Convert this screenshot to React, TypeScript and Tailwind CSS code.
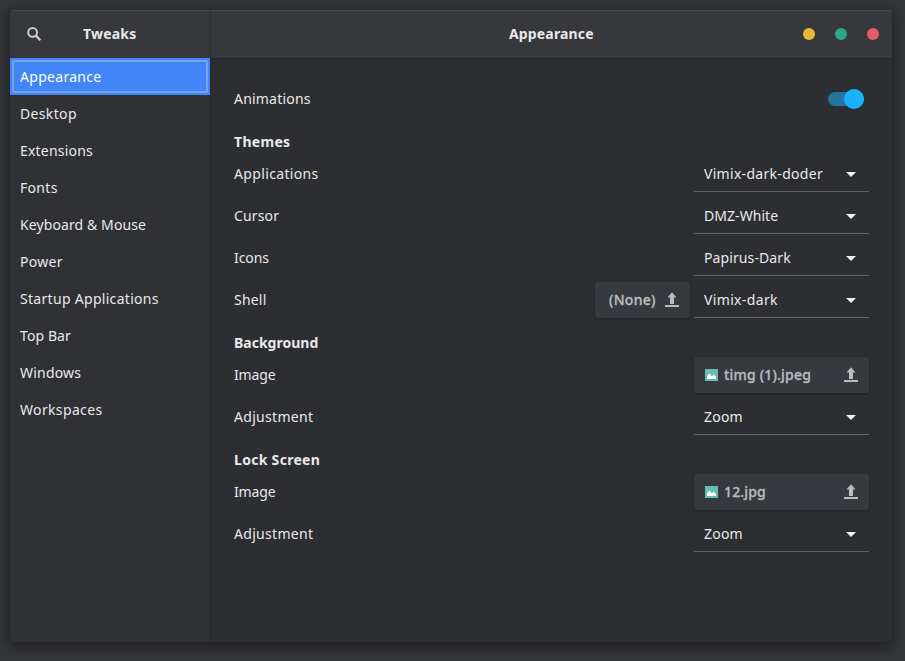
import React from 'react';

const navItems = [
  { label: 'Desktop', spacing: 'tracking-[0.35px]' },
  { label: 'Extensions', spacing: 'tracking-[0.2px]' },
  { label: 'Fonts', spacing: 'tracking-[0.3px]' },
  { label: 'Keyboard & Mouse', spacing: 'tracking-[0.1px]' },
  { label: 'Power', spacing: 'tracking-[0.3px]' },
  { label: 'Startup Applications', spacing: 'tracking-[0.3px]' },
  { label: 'Top Bar', spacing: 'tracking-[0.1px]' },
  { label: 'Windows', spacing: 'tracking-[0.2px]' },
  { label: 'Workspaces', spacing: 'tracking-[0.35px]' },
];

function SearchIcon() {
  return (
    <svg width="16" height="16" viewBox="0 0 16 16" fill="none" stroke="#d0d0d2">
      <circle cx="6.6" cy="6.4" r="4.4" strokeWidth="1.9" />
      <path d="M9.8 9.6l4.6 4.6" strokeWidth="2.3" />
    </svg>
  );
}

function UploadIcon() {
  return (
    <svg width="14" height="16" viewBox="0 0 14 16" fill="#bcbcbe" className="shrink-0">
      <path d="M7 0.3L11.5 5.6H9V12H5V5.6H2.5z" />
      <path d="M0 13h14v2H0z" />
    </svg>
  );
}

function ImageIcon() {
  return (
    <svg width="13" height="12" viewBox="0 0 13 12" className="shrink-0">
      <path d="M0 0h13v12H0z" fill="#67bcb2" />
      <path d="M2 10V7.5L4.4 4.2l2.2 3L9 5.7l2 2.3v2z" fill="#fff" />
    </svg>
  );
}

function Select({ value, spacing }: { value: string; spacing: string }) {
  return (
    <button className="flex h-9 w-[175px] items-center justify-between border-b border-[#626367] pr-[13px] pl-[10px] text-left">
      <span className={spacing}>{value}</span>
      <svg width="10" height="5" viewBox="0 0 10 5" fill="#f0f0f0" className="mt-px">
        <path d="M0 0h10L5 5z" />
      </svg>
    </button>
  );
}

function FileButton({ name, spacing }: { name: string; spacing: string }) {
  return (
    <button className="flex h-9 w-[175px] items-center rounded-[3px] bg-[#363a3e] pr-[11px] pl-[11px] font-medium text-[#bcbcbe] shadow-[0_1px_2px_rgba(0,0,0,0.3)]">
      <ImageIcon />
      <span className={'ml-[6px] flex-1 text-left [-webkit-text-stroke:0.3px_#bcbcbe] ' + spacing}>{name}</span>
      <UploadIcon />
    </button>
  );
}

function Row({ label, spacing, children }: { label: string; spacing: string; children: React.ReactNode }) {
  return (
    <div className="flex h-9 items-center justify-between">
      <span className={spacing}>{label}</span>
      <div className="flex gap-1">{children}</div>
    </div>
  );
}

function Heading({ label, spacing }: { label: string; spacing: string }) {
  return <h2 className={'flex items-center font-bold ' + spacing}>{label}</h2>;
}

export default function App() {
  return (
    <div className="h-[661px] w-[905px] overflow-hidden bg-[#35363a] px-[10px] pt-[10px] font-['Noto_Sans','Open_Sans',sans-serif] text-[14px] leading-[20px] whitespace-nowrap text-[#e9e9ea]">
      <div className="flex h-[632px] w-[882px] overflow-hidden rounded-t-[3px] bg-[#2d2e32] shadow-[0_3px_14px_2px_rgba(0,0,0,0.42)]">
        <aside className="flex w-[200px] flex-col bg-[#303135]">
          <header className="flex h-12 items-center border-t border-[#4b4c50] bg-[#37383c] pb-px pl-4">
            <SearchIcon />
            <h1 className="ml-[41px] font-bold tracking-[0.2px]">Tweaks</h1>
          </header>
          <nav className="flex flex-col">
            <a className="flex h-[37px] bg-[#4285f6] p-[2px] text-white">
              <span className="flex flex-1 items-center rounded-[2px] border-2 border-[#72a4f8] pl-[6px] tracking-[0.3px]">Appearance</span>
            </a>
            {navItems.map((item) => (
              <a key={item.label} className={'flex h-[37px] items-center pl-[10px] ' + item.spacing}>
                {item.label}
              </a>
            ))}
          </nav>
        </aside>
        <div className="flex w-px flex-col bg-[#28292c]">
          <div className="h-12 bg-[#303135]" />
        </div>
        <main className="flex flex-1 flex-col">
          <header className="flex h-[49px] items-center border-t border-b border-t-[#4b4c50] border-b-[#232427] bg-[#37383c] pb-px">
            <h1 className="ml-[298px] font-bold tracking-[0.15px]">Appearance</h1>
            <div className="mr-[13px] ml-auto flex gap-5">
              <span className="size-3 rounded-full bg-[#e9b836]" />
              <span className="size-3 rounded-full bg-[#2fa58b]" />
              <span className="size-3 rounded-full bg-[#e55c66]" />
            </div>
          </header>
          <div className="grid grid-rows-[36px_38px] gap-y-0 pt-[22px] pr-[23px] pl-[23px]">
            <Row label="Animations" spacing="tracking-[0.2px]">
              <span className="mr-[5px] flex h-[14px] w-9 items-center justify-end rounded-full bg-[#24749f]">
                <span className="size-5 shrink-0 rounded-full bg-[#1ab2ff]" />
              </span>
            </Row>
            <Heading label="Themes" spacing="tracking-[0.3px] pt-[12px]" />
          </div>
          <div className="flex flex-col gap-[6px] pt-px pr-[23px] pl-[23px]">
            <Row label="Applications" spacing="tracking-[0.35px]">
              <Select value="Vimix-dark-doder" spacing="tracking-[0.3px]" />
            </Row>
            <Row label="Cursor" spacing="tracking-[0.15px]">
              <Select value="DMZ-White" spacing="tracking-[0.05px]" />
            </Row>
            <Row label="Icons" spacing="tracking-[-0.1px]">
              <Select value="Papirus-Dark" spacing="tracking-[0.1px]" />
            </Row>
            <Row label="Shell" spacing="tracking-[0.2px]">
              <button className="flex h-9 w-[95px] items-center justify-between rounded-[3px] bg-[#363a3e] pr-[11px] pl-[14px] font-medium tracking-[0.3px] text-[#bcbcbe] shadow-[0_1px_2px_rgba(0,0,0,0.3)]">
                <span className="[-webkit-text-stroke:0.3px_#bcbcbe]">(None)</span>
                <UploadIcon />
              </button>
              <Select value="Vimix-dark" spacing="tracking-[0.35px]" />
            </Row>
          </div>
          <section className="flex flex-col gap-[6px] px-[23px]">
            <div className="flex h-[33px] pt-[16px]"><Heading label="Background" spacing="tracking-[0px]" /></div>
            <Row label="Image" spacing="tracking-[-0.15px]">
              <FileButton name="timg (1).jpeg" spacing="tracking-[0.2px]" />
            </Row>
            <Row label="Adjustment" spacing="tracking-[0.3px]">
              <Select value="Zoom" spacing="tracking-[0.2px]" />
            </Row>
          </section>
          <section className="flex flex-col gap-[6px] px-[23px]">
            <div className="flex h-[33px] pt-[16px]"><Heading label="Lock Screen" spacing="tracking-[0.3px]" /></div>
            <Row label="Image" spacing="tracking-[-0.15px]">
              <FileButton name="12.jpg" spacing="tracking-[0.15px]" />
            </Row>
            <Row label="Adjustment" spacing="tracking-[0.3px]">
              <Select value="Zoom" spacing="tracking-[0.2px]" />
            </Row>
          </section>
        </main>
      </div>
    </div>
  );
}
